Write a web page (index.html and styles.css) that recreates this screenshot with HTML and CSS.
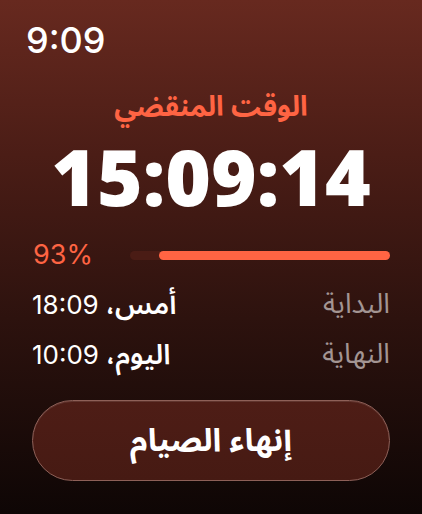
FILE: index.html
```html
<!DOCTYPE html>
<html lang="ar" dir="rtl">
<head>
<meta charset="utf-8">
<link rel="stylesheet" href="styles.css">
</head>
<body>
<div class="screen">
  <div class="status" dir="ltr">9:09</div>
  <div class="title">الوقت المنقضي</div>
  <div class="timer" dir="ltr">15:09:14</div>
  <div class="progress-row">
    <div class="track"><div class="fill" style="width: 89%"></div></div>
    <div class="pct" dir="ltr">93%</div>
  </div>
  <div class="info-row first">
    <span class="label">البداية</span>
    <span class="value"><span class="ar">أمس،</span> 18:09</span>
  </div>
  <div class="info-row">
    <span class="label">النهاية</span>
    <span class="value"><span class="ar">اليوم،</span> 10:09</span>
  </div>
  <button class="end-btn">إنهاء الصيام</button>
</div>
</body>
</html>
```
FILE: styles.css
```css
html, body {
  margin: 0;
  padding: 0;
}
body {
  width: 422px;
  height: 514px;
  overflow: hidden;
  font-family: "Noto Sans Arabic", "DejaVu Sans", "Noto Sans", sans-serif;
}
.screen {
  box-sizing: border-box;
  width: 422px;
  height: 514px;
  padding: 0 32px;
  background: linear-gradient(180deg, #67291f 0%, #4b1d16 30%, #2d120e 62%, #0e0605 100%);
  display: flex;
  flex-direction: column;
  color: #fff;
}
.status {
  font-family: "Inter", "Liberation Sans", sans-serif;
  font-size: 36px;
  font-weight: 500;
  line-height: 40px;
  margin-top: 20px;
  margin-left: -6px;
  text-align: left;
}
.title {
  margin-top: 30px;
  text-align: center;
  color: #ff6443;
  font-size: 28px;
  font-weight: bold;
  line-height: 36px;
}
.timer {
  margin-top: 10px;
  text-align: center;
  font-family: "Open Sans", "Liberation Sans", sans-serif;
  font-size: 78px;
  font-weight: 800;
  line-height: 80px;
}
.progress-row {
  margin-top: 24px;
  display: flex;
  align-items: center;
  justify-content: space-between;
  height: 30px;
}
.track {
  width: 260px;
  height: 9px;
  border-radius: 5px;
  background: #4a1c15;
  display: flex;
}
.fill {
  height: 100%;
  border-radius: 5px;
  background: #ff6443;
}
.pct {
  font-family: "Inter", "Liberation Sans", sans-serif;
  font-size: 27px;
  line-height: 30px;
  color: #ff6443;
  margin-left: 1px;
}
.info-row {
  display: flex;
  justify-content: space-between;
  align-items: center;
  height: 50px;
}
.info-row.first {
  margin-top: 10px;
}
.label {
  color: #a39593;
  font-size: 28px;
  line-height: 36px;
}
.value {
  color: #fff;
  font-family: "Inter", "Liberation Sans", sans-serif;
  font-size: 26px;
  line-height: 36px;
}
.value .ar {
  font-family: "Noto Sans Arabic", "DejaVu Sans", sans-serif;
  font-size: 28px;
  font-weight: 600;
}
.end-btn {
  margin-top: 20px;
  height: 81px;
  width: 100%;
  border-radius: 41px;
  border: 1.5px solid #8e6058;
  background: linear-gradient(180deg, #4e1d16 0%, #461a13 100%);
  color: #fff;
  font-family: "Noto Sans Arabic", "DejaVu Sans", sans-serif;
  font-size: 32px;
  font-weight: bold;
  box-shadow: inset 0 1px 0 rgba(255,255,255,0.1);
}
```
